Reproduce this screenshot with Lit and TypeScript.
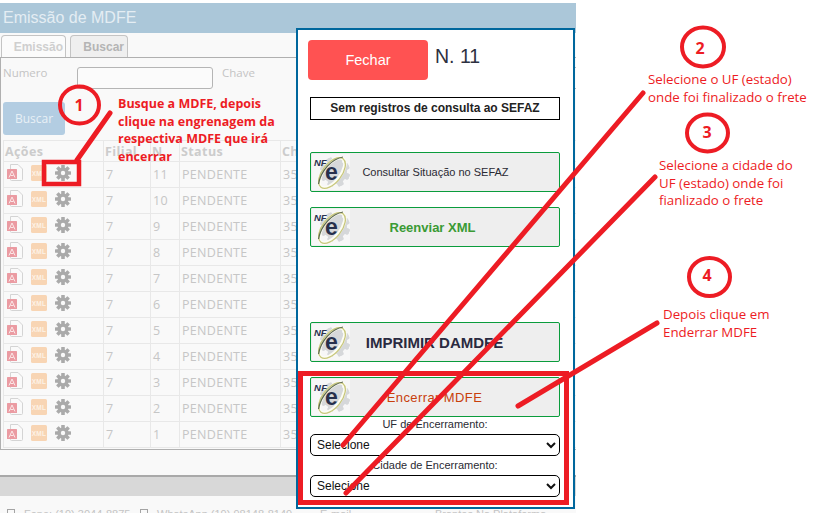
import { LitElement, html, css, svg } from "lit";
import { customElement } from "lit/decorators.js";

const nfe = () => html`<svg class="nfe" width="38" height="36" viewBox="0 0 38 36">
  <rect width="38" height="36" fill="#f7f7f7"/>
  <g fill="#d6d8da">
    <circle cx="23" cy="18" r="12"/>
    ${[0, 45, 90, 135, 180, 225, 270, 315].map((a) => svg`<rect x="20" y="3" width="6" height="30" rx="1.500" transform="rotate(${a + 20} 23 18)"/>`)}
  </g>
  <ellipse cx="20" cy="19" rx="8.500" ry="18" fill="none" stroke="#fdfdf4" stroke-width="3.500" transform="rotate(38 20 19)"/>
  <ellipse cx="20" cy="19" rx="9.500" ry="18" fill="none" stroke="#c8c77c" stroke-width="1.300" transform="rotate(38 20 19)"/>
  <path d="M6.500 30 C9 16 20 5 31 3" fill="none" stroke="#5f6b52" stroke-width="1.200"/>
  <text x="2" y="11.500" font-family="Liberation Sans" font-size="9.500" font-weight="700" font-style="italic" fill="#2a3350">NF</text>
  <text x="13" y="25.500" font-family="Liberation Sans" font-size="23" font-weight="700" fill="#27304c">e</text>
</svg>`;

const gear = () => html`<svg class="ico" width="16" height="16" viewBox="0 0 16 16">
  <g fill="#aaaaaa">
    ${[0, 45, 90, 135].map((a) => svg`<rect x="6.200" y="0" width="3.600" height="16" rx=".5" transform="rotate(${a} 8 8)"/>`)}
    <circle cx="8" cy="8" r="5.600"/>
  </g>
  <circle cx="8" cy="8" r="2.200" fill="#f9f9f9"/>
</svg>`;

const pdf = () => html`<svg class="ico" width="17" height="17" viewBox="0 0 17 17">
  <path d="M3.500 .5H11L15.500 5V15.500a1 1 0 0 1-1 1H4.500a1 1 0 0 1-1-1z" fill="#fafafa" stroke="#d4d4d4"/>
  <rect x="0" y="5" width="10" height="10" rx=".5" fill="#eb9ba2"/>
  <path d="M2 13.500 5 7 8 13.500M3.500 11.500H6.500" fill="none" stroke="#fbe8e8" stroke-width="1"/>
</svg>`;

const xml = () => html`<svg class="ico" width="16" height="16" viewBox="0 0 16 16">
  <rect width="16" height="16" rx="1.500" fill="#f8d5b4"/>
  <text x="8" y="10.500" text-anchor="middle" font-family="Liberation Sans" font-size="6.500" font-weight="700" fill="#fdf2e6">XML</text>
</svg>`;

@customElement("app-root")
export class AppRoot extends LitElement {
  static styles = css`
    :host { display: block; position: relative; width: 816px; height: 513px; overflow: hidden; background: #fff; font-family: "Liberation Sans", sans-serif; }
    .page { width: 576px; height: 510px; margin-top: 3px; background: #f9f9f9; overflow: hidden; display: flex; flex-direction: column; position: absolute; top: 0; left: 0; }
    .title { height: 30px; flex: none; background: #abc7d9; color: #e4edf3; font-size: 16px; line-height: 30px; padding-left: 3px; box-sizing: border-box; }
    .tabs { display: flex; gap: 4px; height: 24px; flex: none; padding: 2px 0 0 1px; box-sizing: border-box; }
    .tab { border: 1px solid #c4c4c4; border-bottom: 0; border-radius: 4px 4px 0 0; font-size: 12px; font-weight: 700; color: #cfcfcf; background: #fbfbfb; box-sizing: border-box; height: 22px; line-height: 22px; text-align: right; padding-right: 2px; }
    .tab.a { width: 65px; }
    .tab.b { width: 58px; background: #efefef; color: #b4b4b4; padding-right: 3px; }
    .panel { border: 1px solid #b0b0b0; height: 393px; width: 620px; box-sizing: border-box; padding: 9px 2px 0 2px; flex: none; }
    .form { display: flex; height: 23px; align-items: flex-start; font-family: "Open Sans", sans-serif; font-size: 11.500px; color: #c4c4c4; }
    .form span { line-height: 14px; margin-top: -1px; }
    .inp { border: 1px solid #b5b5b5; border-radius: 3px; height: 22px; box-sizing: border-box; background: #fbfbfb; }
    .numero { width: 74px; }
    .inp.n { width: 136px; margin-right: 9px; }
    .chave { width: 80px; }
    .inp.c { width: 300px; }
    .btn { width: 62px; height: 33px; margin-top: 12px; background: #b3cde2; color: #e8f0f6; border-radius: 3px; font-family: "Open Sans", sans-serif; font-size: 12px; line-height: 33px; text-align: center; }
    table { border-collapse: collapse; margin-top: 5px; font-family: "Open Sans", sans-serif; table-layout: fixed; width: 610px; }
    th, td { border: 1px solid #e8e8e8; text-align: left; overflow: hidden; white-space: nowrap; box-sizing: border-box; }
    th { height: 21px; font-size: 12.500px; font-weight: 700; color: #cccccc; letter-spacing: .4px; padding: 0 0 0 1px; }
    td { height: 26px; font-size: 12.500px; color: #c6c6c6; letter-spacing: .3px; padding: 0 0 0 2px; }
    .acts { display: flex; align-items: center; padding-bottom: 4px; margin-left: 1px; gap: 7px; }
    .acts .ico:nth-child(2) { margin-right: 1px; }
    .ico { flex: none; display: block; }
    .footer { margin-top: 25px; flex: none; }
    .fbar { height: 21px; background: #d8d8d8; border-top: 2px solid #a9a9a9; box-sizing: border-box; }
    .ftext { display: flex; margin-top: 11px; padding-left: 7px; font-size: 11px; color: #c4c4c4; white-space: nowrap; line-height: 14px; }
    .ftext i { display: block; width: 6px; height: 6px; border: 1px solid #a4a4a4; margin: 2px 9px 0 0; flex: none; }
    .ftext span.f1 { width: 116px; }
    .ftext span.f2 { width: 163px; }
    .ftext span.f3 { width: 115px; }

    .modal { position: absolute; left: 296px; top: 28px; width: 279px; height: 481px; background: #fff; border: 2px solid #00679d; box-sizing: border-box; padding: 10px 13px 0 12px; display: flex; flex-direction: column; color: #2a2a33; }
    .mtop { display: flex; gap: 7px; margin-left: -2px; height: 40px; flex: none; }
    .close { width: 120px; height: 40px; background: #ff5252; color: #fff; border-radius: 4px; font-size: 14.500px; line-height: 40px; text-align: center; }
    .num { font-size: 19.500px; line-height: 32px; color: #2c3040; }
    .msg { margin-top: 17px; height: 23px; flex: none; border: 1px solid #000; box-sizing: border-box; text-align: center; font-size: 12px; font-weight: 700; line-height: 21px; color: #222; }
    .act { height: 40px; flex: none; border: 1px solid #0a9c3c; border-radius: 2px; background: #eeeeee; box-sizing: border-box; display: flex; align-items: center; padding-left: 1px; }
    .act .lbl { flex: 1; text-align: center; padding-right: 40px; }
    .act.s1 { margin-top: 32px; font-size: 11px; }
    .act.s1 .lbl { padding-right: 38px; }
    .act.s2 { margin-top: 15px; font-size: 13px; font-weight: 700; color: #3a9a34; }
    .act.s2 .lbl { padding-right: 44px; }
    .act.s3 { margin-top: 75px; font-size: 15px; font-weight: 700; color: #2a2a40; }
    .act.s4 { margin-top: 15px; font-size: 13px; color: #c8400c; font-weight: 400; letter-spacing: .4px; }
    label { display: block; text-align: center; font-size: 11px; color: #2a2a33; line-height: 14px; }
    label.l2 { margin-top: 2px; }
    select { display: block; width: 100%; height: 22px; border: 1px solid #000; border-radius: 5px; background: #fff; font: 12px "Liberation Sans", sans-serif; color: #111; padding: 0 0 0 2px; margin-top: 3px; flex: none; }

    .marks { position: absolute; left: 0; top: 0; }
    .note { position: absolute; font-family: "Open Sans", sans-serif; font-size: 13.300px; line-height: 17.700px; color: #ed1c24; white-space: nowrap; }
    .note.b { font-weight: 700; font-size: 12.500px; }
    .n0 { left: 118px; top: 95px; }
    .n2 { left: 648px; top: 71px; }
    .n3 { left: 659px; top: 157px; }
    .n4 { left: 663px; top: 306px; }
    .digit { position: absolute; font-family: "Open Sans", sans-serif; font-weight: 700; font-size: 16px; line-height: 20px; width: 30px; text-align: center; color: #ed1c24; }
    .d1 { left: 64px; top: 95px; }
    .d2 { left: 685px; top: 38px; }
    .d3 { left: 692px; top: 122px; }
    .d4 { left: 692px; top: 265px; }
  `;

  render() {
    const rows = [11, 10, 9, 8, 7, 6, 5, 4, 3, 2, 1];
    return html`
      <div class="page">
        <div class="title">Emissão de MDFE</div>
        <div class="tabs"><div class="tab a">Emissão</div><div class="tab b">Buscar</div></div>
        <div class="panel">
          <div class="form">
            <span class="numero">Numero</span><div class="inp n"></div>
            <span class="chave">Chave</span><div class="inp c"></div>
          </div>
          <div class="btn">Buscar</div>
          <table>
            <colgroup><col style="width:100px" /><col style="width:47px" /><col style="width:29px" /><col style="width:101px" /><col /></colgroup>
            <thead><tr><th>Ações</th><th>Filial</th><th>N.</th><th>Status</th><th>Chave</th></tr></thead>
            <tbody>
              ${rows.map((n) => html`<tr>
                <td><div class="acts">${pdf()}${xml()}${gear()}</div></td>
                <td>7</td><td>${n}</td><td>PENDENTE</td><td>35</td>
              </tr>`)}
            </tbody>
          </table>
        </div>
        <div class="footer">
          <div class="fbar"></div>
          <div class="ftext"><i></i><span class="f1">Fone: (19) 3044-8875</span><i></i><span class="f2">WhatsApp (19) 98148-8149</span><span class="f3">E-mail</span><span>Brantes Na Plataforma</span></div>
        </div>
      </div>

      <div class="modal">
        <div class="mtop"><div class="close">Fechar</div><div class="num">N. 11</div></div>
        <div class="msg">Sem registros de consulta ao SEFAZ</div>
        <div class="act s1">${nfe()}<span class="lbl">Consultar Situação no SEFAZ</span></div>
        <div class="act s2">${nfe()}<span class="lbl">Reenviar XML</span></div>
        <div class="act s3">${nfe()}<span class="lbl">IMPRIMIR DAMDFE</span></div>
        <div class="act s4">${nfe()}<span class="lbl">Encerrar MDFE</span></div>
        <label class="l1">UF de Encerramento:</label>
        <select><option>Selecione</option></select>
        <label class="l2">Cidade de Encerramento:</label>
        <select><option>Selecione</option></select>
      </div>

      <svg class="marks" width="816" height="513" viewBox="0 0 816 513" fill="none" stroke="#ed1c24" stroke-width="4" stroke-linecap="round">
        <ellipse cx="79.500" cy="105" rx="19.500" ry="18.500"/>
        <ellipse cx="703" cy="47" rx="21" ry="19.500"/>
        <ellipse cx="707.500" cy="133" rx="20.500" ry="18.500"/>
        <ellipse cx="709.500" cy="277" rx="20.500" ry="19"/>
        <rect x="44" y="162" width="35" height="22" stroke-width="4.500" stroke-linecap="butt"/>
        <rect x="300.500" y="373.500" width="266" height="129" stroke-width="5" stroke-linecap="butt"/>
        <g stroke-width="5">
          <path d="M110 113 77 160"/>
          <path d="M643 93 343 445"/>
          <path d="M655 177 346 493"/>
          <path d="M657 323 518 406"/>
        </g>
      </svg>

      <div class="digit d1">1</div>
      <div class="digit d2">2</div>
      <div class="digit d3">3</div>
      <div class="digit d4">4</div>
      <div class="note b n0">Busque a MDFE, depois<br />clique na engrenagem da<br />respectiva MDFE que irá<br />encerrar</div>
      <div class="note n2">Selecione o UF (estado)<br />onde foi finalizado o frete</div>
      <div class="note n3">Selecione a cidade do<br />UF (estado) onde foi<br />fianlizado o frete</div>
      <div class="note n4">Depois clique em<br />Enderrar MDFE</div>
    `;
  }
}
